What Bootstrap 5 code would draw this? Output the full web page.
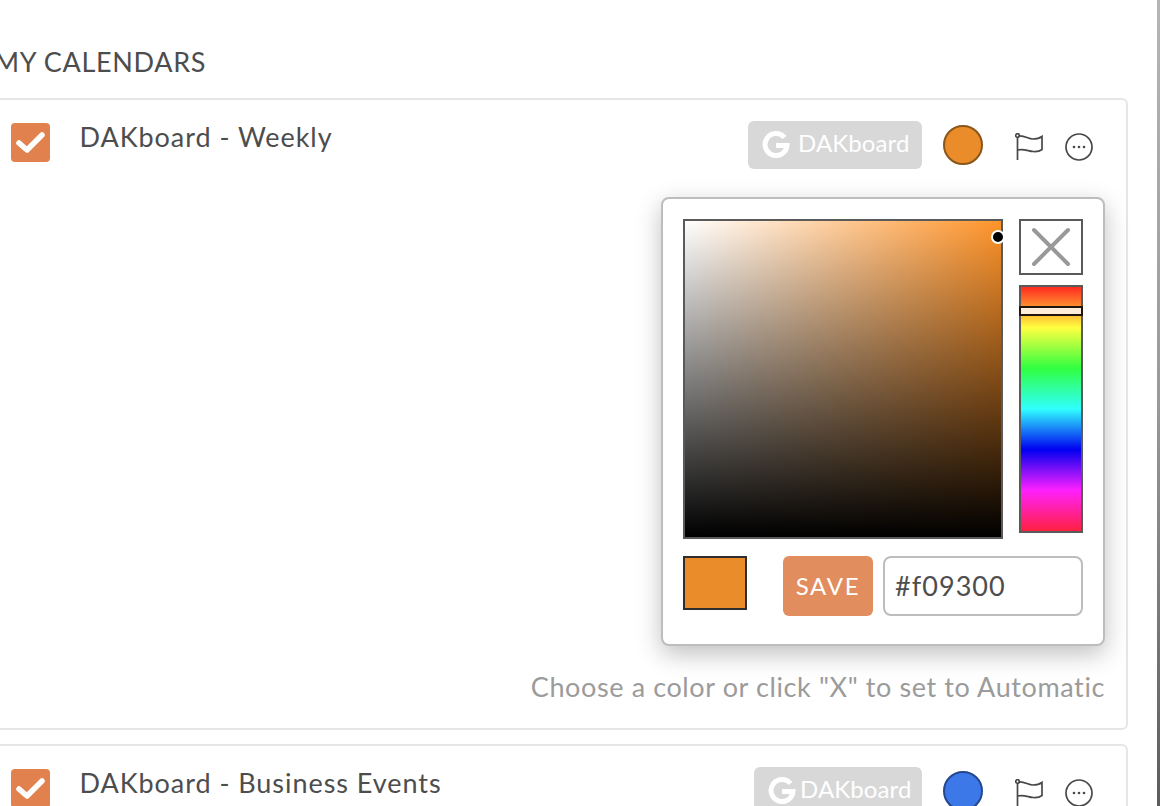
<!DOCTYPE html>
<html lang="en">
<head>
    <meta charset="UTF-8">
    <meta name="viewport" content="width=device-width, initial-scale=1.0">
    <title>My Calendars</title>
    <link href="https://cdn.jsdelivr.net/npm/bootstrap@5.3.0/dist/css/bootstrap.min.css" rel="stylesheet">
    <style>
        html, body {
            height: 100%;
            overflow: hidden;
        }
        body {
            background-color: #fff;
            color: #4d4d4d;
            font-family: 'Lato', 'Open Sans', sans-serif;
            font-size: 27px;
        }
        .page-main {
            width: 1157px;
            flex: none;
        }
        .page-edge {
            width: 3px;
            background: linear-gradient(#b5b5b5, #999 50%, #5c5c5c);
        }
        .cal-wrap {
            width: 1148px;
            margin-left: -20px;
        }
        .cal-title {
            margin: 47px 0 21px 14px;
            font-size: 27px;
            line-height: 30px;
            letter-spacing: .68px;
        }
        .cal-card {
            border: 2px solid #e6e6e6;
            border-radius: 6px;
            margin-bottom: 14px;
        }
        .cal-row {
            padding: 21px 33px 0 29px;
        }
        .cal-check {
            width: 39px;
            height: 39px;
            margin-top: 2px;
            border-radius: 4px;
            background-color: #e1814e;
        }
        .cal-name {
            margin: 1px 0 0 29.5px;
            line-height: 30px;
            letter-spacing: .95px;
        }
        .cal-source {
            height: 48px;
            width: 174px;
            padding-left: 14px;
            gap: 8px;
            border-radius: 6px;
            background-color: #d8d8d8;
            color: #fff;
            font-size: 24px;
            letter-spacing: .1px;
        }
        .cal-source span {
            padding-bottom: 4px;
        }
        .cal-source.tight {
            width: 168px;
            gap: 4px;
        }
        .cal-color {
            width: 40px;
            height: 40px;
            margin: 4px 0 0 21px;
            border: 2px solid #8a5518;
            border-radius: 50%;
            background-color: #eb8c2b;
        }
        .cal-color.blue {
            border-color: #25478f;
            background-color: #3d78e8;
        }
        .cal-flag {
            margin: 12px 0 0 32px;
        }
        .cal-more {
            margin: 12px 0 0 22px;
        }
        .picker {
            width: 444px;
            height: 449px;
            margin: 28px 21px 0 0;
            padding: 20px;
            border: 2px solid #bdbdbd;
            border-radius: 8px;
            background-color: #fff;
            box-shadow: 0 8px 24px rgba(0, 0, 0, .25);
        }
        .picker-sat {
            width: 320px;
            height: 320px;
            border: 2px solid #5a5a5a;
            background: linear-gradient(to top, #000, transparent), linear-gradient(to right, #fff, transparent), #ff942a;
        }
        .picker-dot {
            position: absolute;
            top: 9px;
            right: -4px;
            width: 14px;
            height: 14px;
            border: 2px solid #fff;
            border-radius: 50%;
            background-color: #000;
        }
        .picker-clear {
            width: 64px;
            height: 56px;
            border: 2px solid #5a5a5a;
        }
        .picker-clear svg {
            filter: blur(.7px);
        }
        .picker-hue {
            width: 64px;
            height: 248px;
            margin-top: 10px;
            border: 2px solid #5a5a5a;
            background: linear-gradient(#ff2a1f, #ffff40, #30ff40, #30ffff, #0000f0, #ff20ff, #ff2040);
        }
        .picker-thumb {
            position: absolute;
            top: 19px;
            left: -2px;
            right: -2px;
            height: 10px;
            border: 2px solid #20160e;
            background-color: #ffecd9;
        }
        .picker-foot {
            margin-top: 17px;
        }
        .picker-swatch {
            width: 64px;
            height: 54px;
            border: 2px solid #2e2e2e;
            background-color: #eb8c2b;
        }
        .picker-save {
            width: 90px;
            height: 60px;
            margin-left: 36px;
            padding: 0 0 1px;
            border: 0;
            border-radius: 6px;
            background-color: #e28d5e;
            color: #fff;
            font-size: 24px;
            letter-spacing: 1.7px;
        }
        .picker-hex {
            width: 200px;
            height: 60px;
            margin-left: 10px;
            padding: 0 10px 2px;
            border: 2px solid #bdbdbd;
            border-radius: 8px;
            color: #4d4d4d;
            font-size: 27px;
            letter-spacing: 1.05px;
        }
        .picker-hint {
            margin: 25px 21px 25px 0;
            line-height: 32px;
            color: #9b9b9b;
            letter-spacing: .61px;
        }
    </style>
</head>
<body class="d-flex">
    <div class="page-main">
        <div class="cal-wrap">
            <div class="cal-title">MY CALENDARS</div>

            <div class="card cal-card">
                <div class="d-flex align-items-start cal-row">
                    <div class="cal-check d-flex align-items-center justify-content-center">
                        <svg width="31" height="25" viewBox="0 0 31 25"><path d="M4 13l8 7L27 5" fill="none" stroke="#fff" stroke-width="5.5" stroke-linecap="round" stroke-linejoin="round"/></svg>
                    </div>
                    <div class="cal-name">DAKboard - Weekly</div>
                    <div class="cal-source d-flex align-items-center ms-auto">
                        <svg width="28" height="28" viewBox="0 0 28 28"><path d="M22.5 6.5A11 11 0 1 0 25 14.500H14" fill="none" stroke="#fff" stroke-width="5"/></svg>
                        <span>DAKboard</span>
                    </div>
                    <div class="cal-color"></div>
                    <svg class="cal-flag" width="28" height="28" viewBox="0 0 28 28" fill="none" stroke="#484848" stroke-width="1.7"><circle cx="2.500" cy="2.500" r="1.800"/><path d="M2.500 4.500V27M4 3c6-.5 9 3 14 3 4 0 7-1 9-2.500v13c-2 1.500-5 2.500-9 2-5-.5-9-3-15.500-1.500"/></svg>
                    <svg class="cal-more" width="28" height="28" viewBox="0 0 28 28"><circle cx="14" cy="14" r="13" fill="none" stroke="#484848" stroke-width="1.7"/><circle cx="9" cy="14" r="1.300" fill="#484848"/><circle cx="14" cy="14" r="1.300" fill="#484848"/><circle cx="19" cy="14" r="1.300" fill="#484848"/></svg>
                </div>

                <div class="align-self-end picker">
                    <div class="d-flex justify-content-between">
                        <div class="picker-sat position-relative">
                            <div class="picker-dot"></div>
                        </div>
                        <div>
                            <div class="picker-clear d-flex align-items-center justify-content-center">
                                <svg width="40" height="40" viewBox="0 0 40 40"><path d="M3 3l34 34M37 3L3 37" stroke="#999" stroke-width="4" stroke-linecap="round"/></svg>
                            </div>
                            <div class="picker-hue position-relative">
                                <div class="picker-thumb"></div>
                            </div>
                        </div>
                    </div>
                    <div class="d-flex align-items-start picker-foot">
                        <div class="picker-swatch"></div>
                        <button type="button" class="btn picker-save">SAVE</button>
                        <input type="text" class="form-control picker-hex" value="#f09300">
                    </div>
                </div>

                <div class="align-self-end picker-hint">Choose a color or click "X" to set to Automatic</div>
            </div>

            <div class="card cal-card">
                <div class="d-flex align-items-start cal-row">
                    <div class="cal-check d-flex align-items-center justify-content-center">
                        <svg width="31" height="25" viewBox="0 0 31 25"><path d="M4 13l8 7L27 5" fill="none" stroke="#fff" stroke-width="5.5" stroke-linecap="round" stroke-linejoin="round"/></svg>
                    </div>
                    <div class="cal-name">DAKboard - Business Events</div>
                    <div class="cal-source tight d-flex align-items-center ms-auto">
                        <svg width="28" height="28" viewBox="0 0 28 28"><path d="M22.5 6.5A11 11 0 1 0 25 14.500H14" fill="none" stroke="#fff" stroke-width="5"/></svg>
                        <span>DAKboard</span>
                    </div>
                    <div class="cal-color blue"></div>
                    <svg class="cal-flag" width="28" height="28" viewBox="0 0 28 28" fill="none" stroke="#484848" stroke-width="1.7"><circle cx="2.500" cy="2.500" r="1.800"/><path d="M2.500 4.500V27M4 3c6-.5 9 3 14 3 4 0 7-1 9-2.500v13c-2 1.500-5 2.500-9 2-5-.5-9-3-15.500-1.500"/></svg>
                    <svg class="cal-more" width="28" height="28" viewBox="0 0 28 28"><circle cx="14" cy="14" r="13" fill="none" stroke="#484848" stroke-width="1.7"/><circle cx="9" cy="14" r="1.300" fill="#484848"/><circle cx="14" cy="14" r="1.300" fill="#484848"/><circle cx="19" cy="14" r="1.300" fill="#484848"/></svg>
                </div>
                <div class="pb-5"></div>
            </div>
        </div>
    </div>
    <div class="page-edge"></div>
    <script src="https://cdn.jsdelivr.net/npm/bootstrap@5.3.0/dist/js/bootstrap.bundle.min.js"></script>
</body>
</html>
